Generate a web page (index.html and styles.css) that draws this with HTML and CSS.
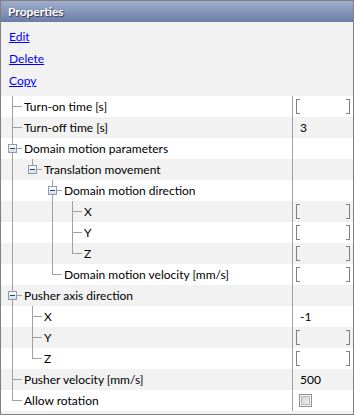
FILE: index.html
```html
<!DOCTYPE html>
<html lang="en">
<head>
  <meta charset="UTF-8">
  <title>Properties</title>
  <link rel="stylesheet" href="styles.css">
</head>
<body>
  <div class="panel">
    <div class="title">Properties</div>

    <div class="actions">
      <a href="#">Edit</a>
      <a href="#">Delete</a>
      <a href="#">Copy</a>
    </div>

    <div class="grid">
      <div class="row">
        <div class="name"><span class="seg tee"></span><span class="label">Turn-on time [s]</span></div>
        <div class="value"><span class="bracket"></span></div>
      </div>
      <div class="row">
        <div class="name"><span class="seg tee"></span><span class="label">Turn-off time [s]</span></div>
        <div class="value"><span class="text">3</span></div>
      </div>
      <div class="row">
        <div class="name"><span class="seg tee"><span class="box"></span></span><span class="label">Domain motion parameters</span></div>
        <div class="value"></div>
      </div>
      <div class="row">
        <div class="name"><span class="seg pipe"></span><span class="seg elbow"><span class="box"></span></span><span class="label">Translation movement</span></div>
        <div class="value"></div>
      </div>
      <div class="row">
        <div class="name"><span class="seg pipe"></span><span class="seg"></span><span class="seg tee"><span class="box"></span></span><span class="label">Domain motion direction</span></div>
        <div class="value"></div>
      </div>
      <div class="row">
        <div class="name"><span class="seg pipe"></span><span class="seg"></span><span class="seg pipe"></span><span class="seg tee"></span><span class="label">X</span></div>
        <div class="value"><span class="bracket"></span></div>
      </div>
      <div class="row">
        <div class="name"><span class="seg pipe"></span><span class="seg"></span><span class="seg pipe"></span><span class="seg tee"></span><span class="label">Y</span></div>
        <div class="value"><span class="bracket"></span></div>
      </div>
      <div class="row">
        <div class="name"><span class="seg pipe"></span><span class="seg"></span><span class="seg pipe"></span><span class="seg elbow"></span><span class="label">Z</span></div>
        <div class="value"><span class="bracket"></span></div>
      </div>
      <div class="row">
        <div class="name"><span class="seg pipe"></span><span class="seg"></span><span class="seg elbow"></span><span class="label">Domain motion velocity [mm/s]</span></div>
        <div class="value"><span class="bracket"></span></div>
      </div>
      <div class="row">
        <div class="name"><span class="seg tee"><span class="box"></span></span><span class="label">Pusher axis direction</span></div>
        <div class="value"></div>
      </div>
      <div class="row">
        <div class="name"><span class="seg pipe"></span><span class="seg tee"></span><span class="label">X</span></div>
        <div class="value"><span class="text">-1</span></div>
      </div>
      <div class="row">
        <div class="name"><span class="seg pipe"></span><span class="seg tee"></span><span class="label">Y</span></div>
        <div class="value"><span class="bracket"></span></div>
      </div>
      <div class="row">
        <div class="name"><span class="seg pipe"></span><span class="seg elbow"></span><span class="label">Z</span></div>
        <div class="value"><span class="bracket"></span></div>
      </div>
      <div class="row">
        <div class="name"><span class="seg tee"></span><span class="label">Pusher velocity [mm/s]</span></div>
        <div class="value"><span class="text">500</span></div>
      </div>
      <div class="row">
        <div class="name"><span class="seg elbow"></span><span class="label">Allow rotation</span></div>
        <div class="value"><span class="checkbox"></span></div>
      </div>
    </div>
  </div>
</body>
</html>
```

FILE: styles.css
```css
body {
  margin: 0;
  font-family: Lato, 'Open Sans', sans-serif;
  font-size: 12px;
  color: #000;
}
.panel {
  box-sizing: border-box;
  width: 354px;
  height: 415px;
  border: 1px solid #808080;
  background: #f2f2f2;
}
.title {
  height: 21px;
  line-height: 21px;
  padding-left: 7px;
  background: linear-gradient(#a0adcb, #6c7da5);
  color: #fff;
  font-weight: bold;
  font-size: 12px;
  text-shadow: 1px 1px 1px #2b3350;
}
.actions {
  display: flex;
  flex-direction: column;
  align-items: flex-start;
  padding: 4px 0 4px 8px;
}
.actions a {
  line-height: 22px;
  color: #0000ff;
  text-decoration: underline;
}
.grid {
  display: flex;
  flex-direction: column;
}
.row {
  display: flex;
  height: 21px;
  background: #fff;
}
.row:nth-child(even) {
  background: #f2f2f2;
}
.name {
  display: flex;
  width: 290px;
  padding-left: 1px;
}
.value {
  flex: 1;
  display: flex;
  align-items: center;
  border-left: 1px solid #a0a0a0;
}
.label {
  padding-left: 2px;
  line-height: 21px;
  white-space: nowrap;
}
.seg {
  flex: none;
  width: 20px;
  height: 21px;
  display: flex;
  align-items: center;
  padding-left: 6px;
  box-sizing: border-box;
}
.pipe {
  background: linear-gradient(#a0a0a0, #a0a0a0) 10px 0 / 1px 100% no-repeat;
}
.tee {
  background:
    linear-gradient(#a0a0a0, #a0a0a0) 10px 0 / 1px 100% no-repeat,
    linear-gradient(#a0a0a0, #a0a0a0) 10px 10px / 10px 1px no-repeat;
}
.elbow {
  background:
    linear-gradient(#a0a0a0, #a0a0a0) 10px 0 / 1px 11px no-repeat,
    linear-gradient(#a0a0a0, #a0a0a0) 10px 10px / 10px 1px no-repeat;
}
.box {
  box-sizing: border-box;
  width: 9px;
  height: 9px;
  border: 1px solid #8e9aae;
  background: linear-gradient(#ffffff, #d8dde6);
  display: flex;
  align-items: center;
  justify-content: center;
}
.box::before {
  content: "";
  width: 5px;
  height: 1px;
  background: #24406e;
}
.text {
  padding-left: 7px;
}
.bracket {
  display: flex;
  justify-content: space-between;
  width: 54px;
  height: 15px;
  margin-left: 3px;
}
.bracket::before,
.bracket::after {
  content: "";
  box-sizing: border-box;
  width: 4px;
  height: 15px;
  border: 1px solid #808080;
}
.bracket::before {
  border-right: none;
}
.bracket::after {
  border-left: none;
}
.checkbox {
  box-sizing: border-box;
  width: 13px;
  height: 13px;
  margin-left: 6px;
  border: 1px solid #8e8f8f;
  background: linear-gradient(135deg, #cfcfcf, #f4f4f4);
  box-shadow: inset 0 0 0 1px #f6f6f6, inset 0 0 0 2px #b9b9b9;
}
```
